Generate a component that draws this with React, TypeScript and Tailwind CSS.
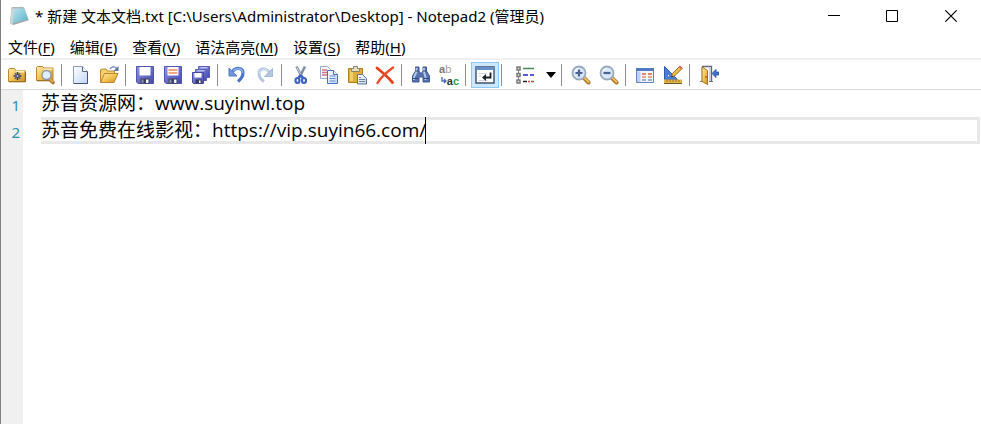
import { Fragment, useState, type ReactNode } from 'react';

const menus = [
  { label: '文件', key: 'F' },
  { label: '编辑', key: 'E' },
  { label: '查看', key: 'V' },
  { label: '语法高亮', key: 'M' },
  { label: '设置', key: 'S' },
  { label: '帮助', key: 'H' },
];

function Icon({ children }: { children: ReactNode }) {
  return (
    <svg viewBox="0 0 20 20" className="size-5" fill="none" aria-hidden="true">
      {children}
    </svg>
  );
}

function Gradients() {
  return (
    <svg className="absolute size-0" aria-hidden="true">
      <defs>
        <linearGradient id="gold" x1="0" y1="0" x2="1" y2="1">
          <stop offset="0" stopColor="#ffe9a0" />
          <stop offset=".5" stopColor="#f3c555" />
          <stop offset="1" stopColor="#cf8f25" />
        </linearGradient>
        <linearGradient id="disk" x1="0" y1="0" x2="1" y2="1">
          <stop offset="0" stopColor="#8f96e6" />
          <stop offset="1" stopColor="#4448ae" />
        </linearGradient>
        <linearGradient id="sheet" x1="0" y1="0" x2="1" y2="1">
          <stop offset="0" stopColor="#ffffff" />
          <stop offset="1" stopColor="#c3d6f6" />
        </linearGradient>
        <linearGradient id="note" x1="0" y1="0" x2="1" y2="1">
          <stop offset="0" stopColor="#b9e6f0" />
          <stop offset="1" stopColor="#5aaec6" />
        </linearGradient>
      </defs>
    </svg>
  );
}

function AppIcon() {
  return (
    <svg viewBox="0 0 20 20" className="size-5" aria-hidden="true">
      <path d="M2.500 1.500 1 17.500l3.200 1.200L6 4z" fill="#a9adaf" />
      <path d="M2.500 1.200 14 .8l1.800 1.600L19.600 14 4 19 1.200 17.600z" fill="#cfd4d6" />
      <path d="M5 3 15 1.800 19.400 13.600 3.600 17.800z" fill="url(#note)" />
      <path d="m3.600 17.400 15.800-4.200.2 1L4 19z" fill="#9da3a6" />
      <path d="M3 1.800h11.600" stroke="#a2aaae" />
    </svg>
  );
}

function DiskShape() {
  return (
    <>
      <path d="M1.500 1.500h17v17H3l-1.500-1.500z" fill="url(#disk)" stroke="#5055ad" />
      <path d="M4.500 2h11v8.500h-11z" fill="#fdfdff" />
      <path d="M5.500 13.500h9v5h-9z" fill="#3c4058" />
      <path d="M11 14.500h2.500v3.500H11z" fill="#f4f4f4" />
      <path d="M6.500 14.500h2v3.500h-2z" fill="#8a8ea5" />
    </>
  );
}

function Lens({ minus = false }: { minus?: boolean }) {
  return (
    <>
      <path d="m13 13 4.500 4.500" stroke="#a8742b" strokeWidth="4" strokeLinecap="round" />
      <path d="m13 12.500 4.500 4.500" stroke="#edbd60" strokeWidth="2" strokeLinecap="round" />
      <circle cx="8" cy="8" r="6.500" fill="#d9e8fb" stroke="#9aa8bb" strokeWidth="1.800" />
      <path d="M4 6.500A4.500 4.500 0 0 1 8 3.500" stroke="#fff" strokeWidth="1.200" />
      <path d={minus ? 'M4.500 8h7' : 'M4.500 8h7M8 4.500v7'} stroke="#4c6190" strokeWidth="2.200" />
    </>
  );
}

const icons: Record<string, ReactNode> = {
  browse: (
    <Icon>
      <path d="M1.500 16.500v-12l1-1h5l1.500 2h9v11z" fill="url(#gold)" stroke="#b98a34" />
      <path d="M9 5.500h8.500v2H9z" fill="#fff0bd" />
      <path d="M2 16.800h16.500V6.500" stroke="#94671f" />
      <path d="M10.500 7v8M6.500 11h8" stroke="#33377e" strokeWidth="1.600" />
      <path d="m7.700 8.200 5.600 5.600M13.300 8.200l-5.600 5.600" stroke="#4c4f86" strokeWidth="1.200" />
      <circle cx="10.500" cy="11" r=".8" fill="#fff" />
    </Icon>
  ),
  find: (
    <Icon>
      <path d="M1.500 15.500v-13l1-1h5l1.500 1.500h9v12.500z" fill="url(#gold)" stroke="#b98a34" />
      <path d="M9 3.500h8.500v1.500H9z" fill="#fff0bd" />
      <path d="M2 15.800h16" stroke="#94671f" />
      <path d="m15 14.500 3 3" stroke="#a8742b" strokeWidth="3.600" strokeLinecap="round" />
      <path d="m15 14 2.500 2.500" stroke="#e5aa48" strokeWidth="1.800" strokeLinecap="round" />
      <circle cx="11.500" cy="10" r="4.500" fill="#e0effd" stroke="#8a98aa" strokeWidth="1.400" />
    </Icon>
  ),
  blank: (
    <Icon>
      <path d="M2.500 1.500h9l5 5v12h-14z" fill="url(#sheet)" stroke="#8b9ab8" />
      <path d="M11.500 1.500v5h5" fill="#f7faff" stroke="#53658b" />
      <path d="M3 18.500h13.500V7" stroke="#3f517b" />
    </Icon>
  ),
  open: (
    <Icon>
      <path d="M1.500 17.500V5l1-1H7l1.500 2h7v4" fill="#f4d06c" stroke="#b98a34" />
      <path d="m1.500 17.500 4-9h13.500l-4 9z" fill="url(#gold)" stroke="#b98430" />
      <path d="M11 4c2-3 5-3 7 0" stroke="#8296b8" strokeWidth="1.500" />
      <path d="M19.500 1v5h-5z" fill="#5d769f" />
    </Icon>
  ),
  save: (
    <Icon>
      <DiskShape />
    </Icon>
  ),
  saveAs: (
    <Icon>
      <DiskShape />
      <path d="M5.500 5h9M5.500 8h9" stroke="#f08a58" strokeWidth="1.500" />
    </Icon>
  ),
  saveCopy: (
    <Icon>
      <path d="M7.500 1.500h11v11h-11z" fill="url(#disk)" stroke="#5a5eb5" />
      <path d="M9.500 2h7v1.500h-7z" fill="#b9bdf0" />
      <path d="M4.500 4.500h11v11h-11z" fill="url(#disk)" stroke="#5a5eb5" />
      <path d="M6.500 5h7v1.500h-7z" fill="#b9bdf0" />
      <path d="M1.500 7.500h11v11h-10l-1-1z" fill="url(#disk)" stroke="#4448a0" />
      <path d="M3.500 8h7v4.500h-7z" fill="#fff" />
      <path d="M4.500 14.500h6v4h-6z" fill="#3b3f5e" />
      <path d="M8 15.500h1.500v2.500H8z" fill="#fff" />
    </Icon>
  ),
  undo: (
    <Icon>
      <path d="M5.500 6.500C9 2 16 2.500 16 8c0 3.500-2 6-5 8.500" stroke="#4a74c6" strokeWidth="3.200" />
      <path d="M6 6C9.500 2.500 15.500 3 15.700 8" stroke="#8db1ec" strokeWidth="1.400" />
      <path d="M2 3v8h8z" fill="#6f96dd" stroke="#5379c2" />
    </Icon>
  ),
  redo: (
    <Icon>
      <path d="M14 7C10.500 2 4 3.500 4 9c0 3.500 2 5.500 5 7.500" stroke="#b6c8e5" strokeWidth="3" />
      <path d="M13 6C9 2.500 5 5 4.500 9" stroke="#d5e1f4" strokeWidth="1.200" />
      <path d="M17.500 3.500v8h-8z" fill="#b5c6e2" stroke="#a9bbd9" />
    </Icon>
  ),
  cut: (
    <Icon>
      <path d="M5.500 1.500 11.500 13M14 1.500 8 13" stroke="#7d8da5" strokeWidth="2.600" />
      <path d="M6 2.500 11 12" stroke="#cbd5e1" />
      <ellipse cx="6.500" cy="15.500" rx="2" ry="2.500" stroke="#3c63bd" strokeWidth="2.200" />
      <ellipse cx="13" cy="15.500" rx="2" ry="2.500" stroke="#3c63bd" strokeWidth="2.200" />
      <path d="m7.500 12.500 2-2 2.500 2" stroke="#3c63bd" strokeWidth="2.400" />
    </Icon>
  ),
  copy: (
    <Icon>
      <path d="M1.500 1.500h7l3 3v9h-10z" fill="#f6f8ff" stroke="#9aa8ca" />
      <path d="M3 5h5M3 7.500h6M3 10h6" stroke="#db7180" strokeWidth="1.300" />
      <path d="M8.500 5.500h6l4 4v9h-10z" fill="url(#sheet)" stroke="#4a6fc0" />
      <path d="M14.500 5.500v4h4" fill="#fff" stroke="#4a6fc0" />
      <path d="M10.500 11h6M10.500 13.500h6M10.500 16h6" stroke="#6589d2" strokeWidth="1.200" />
    </Icon>
  ),
  paste: (
    <Icon>
      <path d="M1.500 3.500h14v14h-14z" fill="#e3ad3c" stroke="#b0801f" />
      <path d="M3 5h3v11H3z" fill="#f2cd70" />
      <path d="M4.500 6.500v-3h2v-2h4v2h2v3z" fill="#e3dfc8" stroke="#8b8460" />
      <path d="M10.500 9.500h5l4 4v5.500h-9z" fill="url(#sheet)" stroke="#60728f" />
      <path d="M12 12.500h2M12 14.500h6M12 16.500h6" stroke="#6d80a5" />
    </Icon>
  ),
  remove: (
    <Icon>
      <path d="M2 3C7 7 13 12 17.500 17.500" stroke="#e83f18" strokeWidth="2.800" strokeLinecap="round" />
      <path d="M18 2.500C12 7 6 12 2.500 18" stroke="#ee4c26" strokeWidth="2.400" strokeLinecap="round" />
    </Icon>
  ),
  search: (
    <Icon>
      <path d="M4.500 2h3.500v4l1 2h2l1-2V2h3.500v4l3 5v6h-6.500v-5H8v5H1.500v-6l3-5z" fill="#5673ae" stroke="#3e5a93" />
      <path d="M5.500 3v4L3 12v3M13 3v4l1.500 5v3" stroke="#b5caef" strokeWidth="1.800" />
      <path d="M2 13.500h5.500M12.500 13.500h5.500M4.500 6h3.500M12 6h3.500" stroke="#30497f" />
    </Icon>
  ),
  replace: (
    <span className="flex h-6 w-5 flex-col justify-center font-['Liberation_Sans',sans-serif] text-[11px] leading-3 font-bold">
      <span className="flex">
        <span className="text-[#777777]">a</span>
        <span className="font-normal text-[#a0a0a0]">b</span>
      </span>
      <span className="flex items-center justify-end">
        <svg viewBox="0 0 6 8" className="h-2 w-1.5" fill="none" aria-hidden="true">
          <path d="M1 0v4h4M3 2l2 2-2 2" stroke="#416cb5" strokeWidth="1.300" />
        </svg>
        <span className="text-[#333333]">a</span>
        <span className="text-[#329e42]">c</span>
      </span>
    </span>
  ),
  wrap: (
    <Icon>
      <path d="M1 2h18v16H1z" fill="#fff" stroke="#3e5068" strokeWidth="1.400" />
      <path d="M1 2h18v3H1z" fill="#6690cc" />
      <path d="M3.500 8.500h7M3.500 11h3M3.500 15.500h9" stroke="#d0d5dc" />
      <path d="M15.500 7.500v5H9.500" stroke="#18202b" strokeWidth="1.800" />
      <path d="M11 9v7l-4-3.500z" fill="#18202b" />
    </Icon>
  ),
  scheme: (
    <Icon>
      <path d="M3.500 3v14" stroke="#888" />
      <path d="M2 2h3v3H2zM2 8.500h3v3H2zM2 15h3v3H2z" fill="#eee" stroke="#777" strokeWidth="1.500" />
      <path d="M8 3.500h11" stroke="#478953" strokeWidth="1.500" />
      <path d="M8 10h5M15 10h4" stroke="#2225d0" strokeWidth="1.500" />
      <path d="M8 16.500h4" stroke="#222" strokeWidth="1.500" />
      <path d="M13 16.500h2M16 16.500h3" stroke="#e44242" strokeWidth="1.500" />
    </Icon>
  ),
  zoomIn: (
    <Icon>
      <Lens />
    </Icon>
  ),
  zoomOut: (
    <Icon>
      <Lens minus />
    </Icon>
  ),
  customize: (
    <Icon>
      <path d="M1.500 3.500h17v14h-17z" fill="#f1f6ff" stroke="#6385c4" />
      <path d="M1 3h18v3H1z" fill="#5079c2" />
      <path d="M2 6.500h3.500V17H2z" fill="#bcd1f4" />
      <path d="M7 9h4M13 9h4" stroke="#e05f47" strokeWidth="1.600" />
      <path d="M7 12h4M13 12h4" stroke="#ec8b69" strokeWidth="1.600" />
      <path d="M7 15h4M13 15h4" stroke="#7f9bcd" strokeWidth="1.600" />
    </Icon>
  ),
  settings: (
    <Icon>
      <path d="M1.500 1.500v13h13z" fill="#4a80d7" stroke="#2c5ab1" />
      <path d="M4.500 8.500v3.200h3.200z" fill="#fff" stroke="#2c5ab1" strokeWidth=".7" />
      <path d="M1 14.500h18v4H1z" fill="#e2b54b" />
      <path d="M1 18.500h18" stroke="#6b5a2c" />
      <path d="M4 15v2M7 15v2M10 15v2M13 15v2M16 15v2" stroke="#9b7a35" />
      <path d="m8.500 12 1-3.500L17 1l2.300 2.300-7.500 7.500z" fill="#f0bd4a" stroke="#996327" />
      <path d="m16 2 2.300 2.300 1.200-1.200-2.300-2.300z" fill="#d86b56" />
      <path d="m8.300 12.200.5-1.800 1.300 1.300z" fill="#222" />
    </Icon>
  ),
  exit: (
    <Icon>
      <path d="M3.500 17V1.500h9V17" stroke="#62666e" strokeWidth="1.300" />
      <path d="M10 2.500h2V16h-2z" fill="#cdd2da" />
      <path d="M3 2l5.500 3.500v14L3 16.500z" fill="url(#gold)" stroke="#a7711f" />
      <path d="M7 11v2" stroke="#6a4817" />
      <path d="M1 16.500h2M10 16.500h4" stroke="#6e727b" />
      <path d="m13 8.500 4-4.200v2.700h3v3h-3v2.700z" fill="#3e72c9" stroke="#284f99" strokeWidth=".7" />
    </Icon>
  ),
};

const groups: { id: string; title: string }[][] = [
  [{ id: 'browse', title: '浏览' }, { id: 'find', title: '收藏夹' }],
  [{ id: 'blank', title: '新建' }, { id: 'open', title: '打开' }],
  [{ id: 'save', title: '保存' }, { id: 'saveAs', title: '另存为' }, { id: 'saveCopy', title: '保存副本' }],
  [{ id: 'undo', title: '撤销' }, { id: 'redo', title: '重做' }],
  [{ id: 'cut', title: '剪切' }, { id: 'copy', title: '复制' }, { id: 'paste', title: '粘贴' }, { id: 'remove', title: '删除' }],
  [{ id: 'search', title: '查找' }, { id: 'replace', title: '替换' }],
  [{ id: 'wrap', title: '自动换行' }],
  [{ id: 'scheme', title: '语法方案' }],
  [{ id: 'zoomIn', title: '放大' }, { id: 'zoomOut', title: '缩小' }],
  [{ id: 'customize', title: '自定义方案' }, { id: 'settings', title: '自定义' }],
  [{ id: 'exit', title: '退出' }],
];

function ToolButton({ id, title }: { id: string; title: string }) {
  if (id === 'scheme') {
    return (
      <>
        <button type="button" aria-label={title} className="flex h-6 w-9 items-center justify-center hover:bg-[#e5f3ff]">
          {icons[id]}
        </button>
        <button type="button" aria-label="选择语法方案" className="flex h-6 w-4 items-center justify-center hover:bg-[#e5f3ff]">
          <svg viewBox="0 0 10 6" className="h-1.5 w-2.5" aria-hidden="true">
            <path d="M0 0h10L5 6z" fill="#000" />
          </svg>
        </button>
      </>
    );
  }
  return (
    <button
      type="button"
      aria-label={title}
      aria-pressed={id === 'wrap' ? true : undefined}
      className={
        id === 'wrap'
          ? 'flex h-[26px] w-7 items-center justify-center border border-[#90c8f6] bg-[#cce8ff]'
          : 'flex h-[26px] w-7 items-center justify-center hover:bg-[#e5f3ff]'
      }
    >
      {icons[id]}
    </button>
  );
}

export default function App() {
  const [text, setText] = useState('苏音资源网：www.suyinwl.top\n苏音免费在线影视：https://vip.suyin66.com/');
  const lines = text.split('\n');

  return (
    <div className="relative flex min-h-screen flex-col border-l border-[#808080] bg-white font-['Noto_Sans','Noto_Sans_CJK_SC',sans-serif] text-black">
      <Gradients />
      <header className="flex h-8 items-center">
        <div className="flex min-w-0 flex-1 items-center gap-1.5 pl-2">
          <AppIcon />
          <h1 className="truncate text-[15px]">* 新建 文本文档.txt [C:\Users\Administrator\Desktop] - Notepad2 (管理员)</h1>
        </div>
        <button type="button" aria-label="最小化" className="flex h-8 w-[58px] items-center justify-center hover:bg-gray-200">
          <svg viewBox="0 0 12 12" className="size-3" aria-hidden="true"><path d="M0 5.500h12" stroke="#000" /></svg>
        </button>
        <button type="button" aria-label="最大化" className="flex h-8 w-[58px] items-center justify-center hover:bg-gray-200">
          <svg viewBox="0 0 12 12" className="size-3" fill="none" aria-hidden="true"><path d="M.5.500h11v11H.5z" stroke="#000" /></svg>
        </button>
        <button type="button" aria-label="关闭" className="flex h-8 w-[60px] items-center justify-center hover:bg-red-500">
          <svg viewBox="0 0 12 12" className="size-3" aria-hidden="true"><path d="m.3.300 11.400 11.400M11.700.300.300 11.700" stroke="#000" strokeWidth="1.200" /></svg>
        </button>
      </header>

      <nav className="flex h-[26px] items-center gap-[15px] pt-1 pl-[7px] text-[15px]">
        {menus.map((m) => (
          <button key={m.key} type="button" className="whitespace-nowrap hover:bg-[#e5f3ff]">
            {m.label}(<span className="underline underline-offset-2">{m.key}</span>)
          </button>
        ))}
      </nav>

      <div role="toolbar" aria-label="工具栏" className="flex h-8 items-center border-t-2 border-b border-t-[#f0f0f0] border-b-[#d9d9d9] pl-0.5">
        {groups.map((group, i) => (
          <Fragment key={i}>
            {i > 0 && (
              <span className="flex w-2 pl-0.5">
                <span className="h-[22px] w-px bg-[#8d8d8d]" />
              </span>
            )}
            {group.map((tool) => (
              <ToolButton key={tool.id} id={tool.id} title={tool.title} />
            ))}
          </Fragment>
        ))}
      </div>

      <main className="flex flex-1">
        <div className="w-[22px] shrink-0 bg-[#f0f0f0] pt-0.5 pr-[3px] text-right text-[15px] leading-[27px] text-[#2b91af]" aria-hidden="true">
          {lines.map((_, i) => (
            <div key={i}>{i + 1}</div>
          ))}
        </div>
        <div className="relative flex flex-1 pl-[18px]">
          <div className="pointer-events-none absolute top-[27px] right-px left-[18px] h-[27px] border-y-[3px] border-r-[3px] border-[#e8e8e8]">
            <span className="absolute -top-[3px] left-[384px] h-[27px] w-px bg-black" />
          </div>
          <textarea
            aria-label="文本编辑器"
            spellCheck={false}
            value={text}
            onChange={(e) => setText(e.target.value)}
            className="relative flex-1 resize-none bg-transparent font-['Open_Sans','Noto_Sans_CJK_SC',sans-serif] text-[19px] leading-[27px] outline-none"
          />
        </div>
      </main>
    </div>
  );
}
